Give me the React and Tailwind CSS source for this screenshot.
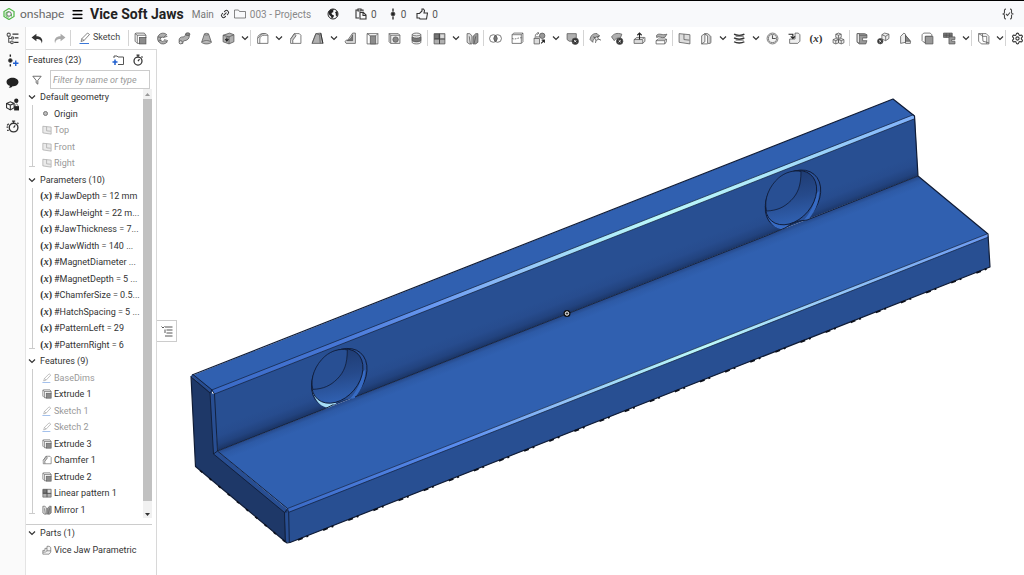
import clsx from 'clsx'
import { Link2, Menu, Settings } from 'lucide-react'

const INK = '#555'
const FILL = '#b0b0b0'

// 24x24 glyphs shared by the toolbar, the side rail and the feature tree
const glyphs = {
  undo: <path d="M10 3 1 10l9 7v-4c6 0 9 2 10 8 3-8-2-13-10-13z" fill="#333" stroke="none" />,
  redo: <path d="m14 3 9 7-9 7v-4c-6 0-9 2-10 8-3-8 2-13 10-13z" fill="#aaa" stroke="none" />,
  sketch: (
    <>
      <path d="m4 19 2-6L17 2l4 3L10 17z M6 13l4 4" />
      <path d="M1 23h19" stroke="#3b78d8" strokeWidth="2" />
    </>
  ),
  extrude: (
    <>
      <path d="M5 20 2 17V3l2-1h15l3 4H6L2 3M6 6v15" fill="#eee" />
      <rect x="10" y="10" width="12" height="12" fill="#8c8c8c" />
      <path d="M6 21h5M22 6v5" />
    </>
  ),
  revolve: (
    <>
      <path d="M20 5A10 10 0 1 0 21 18l-6-2a4 4 0 1 1-1-6z" fill={FILL} />
      <path d="m14 10 7-2M15 14l7 2M3 9l7 1M4 17l6-2" />
    </>
  ),
  sweep: (
    <>
      <path d="M2 15c0-4 3-6 7-6 3 0 4-1 5-5l7 2c0 6-3 9-8 10-3 0-4 1-4 5H3z" fill={FILL} />
      <ellipse cx="18" cy="4" rx="4" ry="2.5" fill="#888" />
      <ellipse cx="5" cy="19" rx="3" ry="3" fill="#ddd" />
    </>
  ),
  loft: (
    <>
      <path d="m8 4 8 0 5 15c-4 4-14 4-18 0z" fill={FILL} />
      <path d="M8 4c2-2 6-2 8 0-2 2-6 2-8 0zM3 19c4-4 14-4 18 0" fill="#ccc" />
    </>
  ),
  thicken: (
    <>
      <path d="M2 6 14 2l8 3v13l-9 4-11-4z" fill={FILL} />
      <path d="m2 6 11 3 9-4M13 9v13" />
      <path d="M9 10v6m-3-3 3 4 3-4" stroke="#222" strokeWidth="2" />
    </>
  ),
  fillet: (
    <>
      <path d="M3 21V12C3 6 8 3 13 3h6l3 3v15z" fill="#fff" />
      <path d="M3 12 6 9c2-4 4-6 10-6M7 21v-8c0-5 4-7 8-7h7" />
    </>
  ),
  chamfer: (
    <>
      <path d="M3 21v-8l7-10h9l3 3v15H3z" fill="#fff" />
      <path d="m3 13 7-10 3 4-6 8v6" fill="#ccc" />
    </>
  ),
  draft: (
    <>
      <path d="m9 3 9-1 4 19H2z" fill={FILL} />
      <path d="m9 3 7 2 1 16M2 21 9 3" />
      <path d="m18 2 4 19" stroke="#333" strokeWidth="1.800" />
    </>
  ),
  rib: (
    <>
      <path d="M16 2h5v19H4l-2-3 2-3h3z" fill="#ddd" />
      <path d="M16 5v11H6c5-2 8-5 10-11z" fill="#777" />
    </>
  ),
  shell: (
    <>
      <path d="M2 3h20v19H2z" fill="#fff" />
      <path d="M8 7h10v15H8z" fill="#8c8c8c" />
      <path d="M2 3l6 4M22 3l-4 4" />
    </>
  ),
  hole: (
    <>
      <path d="M5 21 2 18V3h17l3 3v15z M2 3l3 3h17M5 6v15" fill="#eee" />
      <circle cx="14" cy="14" r="5" fill="#888" />
    </>
  ),
  thread: (
    <>
      <path d="M4 5c0-4 16-4 16 0v14c0 4-16 4-16 0z" fill="#eee" />
      <path d="M4 9c4 3 12 3 16 0v7c-4 3-12 3-16 0z" fill="#777" />
      <path d="M4 5c4 3 12 3 16 0" />
    </>
  ),
  pattern: (
    <>
      <path d="M2 3h20v19H2z" fill={FILL} />
      <path d="M3 4h8v8H3z" fill="#777" />
      <path d="M12 3v19M2 13h20" stroke="#444" strokeWidth="1.800" />
      <path d="M14 5h6v6h-6z" fill="#ddd" stroke="none" />
    </>
  ),
  mirror: (
    <>
      <path d="M2 3h5l4 4v15H6l-4-3z" fill="#ddd" />
      <path d="M22 3h-4l-5 5v14h5l4-3z" fill="#999" />
      <path d="m6 8 2 14M18 8l-3 13" />
    </>
  ),
  boolean: (
    <>
      <circle cx="8" cy="12" r="7" />
      <circle cx="16" cy="12" r="7" />
      <path d="M12 6.500a7 7 0 0 1 0 11 7 7 0 0 1 0-11z" fill="#777" />
    </>
  ),
  split: (
    <>
      <path d="M2 5 5 2h17v16l-3 3H2z" fill="#fff" />
      <path d="M2 5h17v16M19 5l3-3" />
      <path d="M2 12c7 3 12-3 20-1" strokeDasharray="3 2" />
    </>
  ),
  transform: (
    <>
      <path d="M2 12h10v10H2z M2 12l3-3h8" fill="#ddd" />
      <path d="M4 9c0-5 3-7 6-7M8 0l3 2-3 3" />
      <circle cx="17" cy="7" r="5" fill="#999" />
      <path d="m15 21 6-6m0 5v-5h-5" stroke="#222" strokeWidth="2" />
    </>
  ),
  removePart: (
    <>
      <path d="M2 3h17v14H6l-4-3z" fill={FILL} />
      <circle cx="17" cy="17" r="6" fill="#333" />
      <path d="m15 15 4 4m0-4-4 4" stroke="#fff" strokeWidth="1.600" />
    </>
  ),
  modifyFillet: (
    <>
      <path d="M2 14C3 6 8 2 15 3l4 4-7 4c-3 1-5 4-5 8z" fill={FILL} />
      <path d="m8 9 14 6M12 20l2-9 6-4" stroke="#333" />
      <circle cx="14" cy="12" r="3" fill="#eee" />
    </>
  ),
  deleteFace: (
    <>
      <path d="M1 9C5 3 11 1 20 4l-3 8c-5-2-9 0-11 4z" fill={FILL} />
      <circle cx="16" cy="17" r="6" fill="#333" />
      <path d="m14 15 4 4m0-4-4 4" stroke="#fff" strokeWidth="1.600" />
    </>
  ),
  moveFace: (
    <>
      <path d="m2 14 5-4h14l-4 4zM2 14v7h16v-7M18 21l4-4v-7" fill="#ddd" />
      <path d="M12 14V2m-4 4 4-4 4 4" stroke="#222" strokeWidth="2" />
    </>
  ),
  replaceFace: (
    <>
      <path d="M3 6c5-5 10 1 19-2l-4 6C12 12 8 7 3 10z" fill={FILL} />
      <path d="m2 16 4-3h15l-3 3zM2 16v6h16v-6M18 22l3-4v-5" fill="#fff" />
    </>
  ),
  plane: (
    <>
      <path d="M2 3 22 5v17L2 19z" fill="#ddd" />
      <path d="M11 4v10l10 1" />
    </>
  ),
  frame: (
    <>
      <path d="m3 7 6-4v15l-6 4z" fill="#eee" />
      <path d="M9 3h5l5 4v14h-5V7l-5-3z" fill="#ddd" />
      <path d="M3 22h11" />
      <path d="M20 8v12" stroke="#999" strokeWidth="2.500" />
    </>
  ),
  helix: (
    <>
      <path d="M2 4c5 3 14 3 19 0M2 11c5 3 14 3 19 0M2 18c5 3 14 3 19 0" stroke="#333" strokeWidth="2.600" />
      <path d="M5 8h15M5 15h15" />
    </>
  ),
  clock: (
    <>
      <circle cx="12" cy="12" r="10" fill="#fff" />
      <circle cx="12" cy="12" r="7.500" fill="#f2f2f2" />
      <path d="M12 6v6h6" strokeWidth="2" />
    </>
  ),
  derived: (
    <>
      <path d="M3 13v8h15l4-4V5l-3-3h-6v11z" fill="#eee" />
      <path d="M1 4h8v7m-4-3 4 4 4-4" stroke="#222" strokeWidth="2" />
    </>
  ),
  composite: (
    <>
      <path d="m12 2 5 2v6l-5 2-5-2V4zM7 12l5 2v6l-5 2-5-2v-6zM17 12l5 2v6l-5 2-5-2v-6z" fill="#eee" />
      <path d="m7 4 5 2 5-2M12 6v6M2 14l5 2 5-2 5 2 5-2M7 16v6M17 16v6" />
    </>
  ),
  flange: (
    <>
      <path d="M4 3h14l4 2v6h-8v5h8l-2 6H8l-4-3z" fill="#999" />
      <path d="M4 3h4v18l-4-3z" fill="#fff" />
      <path d="M8 6h14" />
    </>
  ),
  flatten: (
    <>
      <path d="m9 5 5-3 8 2v8l-6 4-7-3z" fill="#eee" />
      <path d="m9 5 7 3 6-4M16 8v8" />
      <circle cx="6" cy="17" r="5" fill="#333" />
      <path d="m4 15 4 4m0-4-4 4" stroke="#fff" />
    </>
  ),
  corner: (
    <>
      <path d="M3 21V8l6-6 3 2v15zM12 21h9v-4L12 6z" fill="#eee" />
      <path d="M12 6v11h9z" fill="#888" />
    </>
  ),
  bendRelief: (
    <>
      <path d="M2 5 5 2h12l3 3v3H8v12l-4-2-2-2z" fill="#fff" />
      <path d="M8 8h14v14H8z" fill="#999" />
    </>
  ),
  table: (
    <>
      <path d="M1 2h16v8H1z" fill="#777" />
      <path d="M6 2v8M12 2v8M1 6h16" />
      <path d="M11 9h11v5h-6v3h6v5H11z" fill="#999" />
    </>
  ),
  view: (
    <>
      <path d="M3 3h14l5 5v14H8l-5-5z" fill="#fff" />
      <path d="m10 3 1 14M3 3l7 4M11 17l11 3M10 8h8v14" />
    </>
  ),
  part: (
    <>
      <path d="M2 13h5V8h5V3h5l4 3v11l-4 5H2z" fill="#f4f4f4" />
      <path d="M12 8v6l-4 3H2M12 14h9" />
    </>
  ),
  tree: (
    <>
      <circle cx="5" cy="5" r="3" strokeWidth="2" />
      <path d="M5 8v11h4M5 12h5" strokeWidth="2" />
      <path d="M12 4h11M16 11h7M15 19h8" stroke="#333" strokeWidth="2.400" />
      <circle cx="11" cy="19" r="2.500" strokeWidth="2" />
      <circle cx="12" cy="11" r="2" strokeWidth="2" />
    </>
  ),
  insert: (
    <>
      <circle cx="8" cy="12" r="3.500" fill="#222" />
      <path d="M8 1v4M8 19v4" stroke="#222" strokeWidth="2.600" />
      <path d="M18 12v10M13 17h10" stroke="#1f5fd0" strokeWidth="2.600" />
    </>
  ),
  comment: <path d="M12 3c6 0 11 3 11 8s-5 8-11 8c-1 2-4 3-7 3 2-1 2-3 2-4-4-1-6-4-6-7 0-5 5-8 11-8z" fill="#222" stroke="none" />,
  config: (
    <>
      <path d="m1 10 7-3 7 3v8l-7 4-7-4z M1 10l7 3 7-3M8 13v9" stroke="#333" strokeWidth="2" />
      <circle cx="19" cy="5" r="4" fill="#222" stroke="none" />
      <path d="M15 15h9v8h-9z" fill="#222" stroke="none" />
      <path d="M17 15c0-5 5-5 5 0" />
    </>
  ),
  stopwatch: (
    <>
      <circle cx="12" cy="14" r="8" stroke="#333" strokeWidth="2.500" />
      <path d="M9 2h6M12 2v4M19 5l2 2M12 14l3-4" stroke="#333" strokeWidth="2.500" />
    </>
  ),
  rollingWatch: (
    <>
      <circle cx="14" cy="14" r="8" stroke="#333" strokeWidth="2.500" />
      <path d="M11 2h6M14 2v4M21 5l2 2M14 14l3-4M5 7l-3 3M4 13H1M5 19H2" stroke="#333" strokeWidth="2.200" />
    </>
  ),
  addFolder: (
    <>
      <path d="M4 8V4h6l2 2h11v15H12" strokeWidth="2" />
      <path d="M6 11v11M1 16h10" stroke="#1f5fd0" strokeWidth="3" />
    </>
  ),
  folder: <path d="M1 20V4h8l2 3h12v13z" />,
  funnel: <path d="M2 3h20l-8 10v9l-4-3v-6z" strokeWidth="2" />,
  globe: (
    <>
      <circle cx="12" cy="12" r="10" stroke="#222" strokeWidth="2" />
      <path d="M3 8c3-5 8-6 11-5l-2 3 1 2-4 2 1 3 4 2-1 3-3 3c-2-1-1-4-3-5s-4-4-4-8zM16 9l3-3c3 3 3 8 1 11l-3-3 1-2z" fill="#222" stroke="none" />
    </>
  ),
  copy: (
    <>
      <path d="M8 20H2V4h4m6 0h4v3M6 2h6v4H6z" stroke="#333" strokeWidth="2.200" />
      <path d="M10 9h7l5 5v8H10zM16 9v6h6" stroke="#333" strokeWidth="2.200" />
    </>
  ),
  version: (
    <>
      <circle cx="12" cy="12" r="4" fill="#222" />
      <path d="M12 1v6M12 17v6" stroke="#222" strokeWidth="2.600" />
    </>
  ),
  like: <path d="M2 11h5l5-5V2h3l2 3-1 5h7l-2 12H8l-1-2H2z" stroke="#333" strokeWidth="2.200" />,
  custom: <path d="M8 2C4 2 5 6 5 9s-4 3-4 3 4 0 4 3-1 7 3 7M16 2c4 0 3 4 3 7s4 3 4 3-4 0-4 3 1 7-3 7M8 12l3 3 5-6" stroke="#444" strokeWidth="2.200" />,
  panel: <path d="m1 3 3 3 3-3M8 4h15M11 10h12M11 16h12M8 22h15M8 9v7" strokeWidth="2" />,
}

function Glyph({ name, className = 'size-3' }) {
  return (
    <svg viewBox="0 0 24 24" className={clsx('shrink-0', className)} fill="none" stroke={INK} strokeWidth="1.400" aria-hidden="true">
      {glyphs[name]}
    </svg>
  )
}

function Chevron({ className }) {
  return (
    <svg viewBox="0 0 8 8" className={clsx('size-2 shrink-0', className)} fill="none" stroke="#333" strokeWidth="1.200" aria-hidden="true">
      <path d="m1 2.500 3 3 3-3" />
    </svg>
  )
}

function VariableMark({ className }) {
  return (
    <span className={clsx("font-['Liberation_Serif',serif] font-bold text-[#333]", className)}>
      (<i>x</i>)
    </span>
  )
}

const toolGroups = [
  ['extrude', 'revolve', 'sweep', 'loft', 'thicken', 'more'],
  ['fillet', 'more', 'chamfer', 'draft', 'more', 'rib', 'shell', 'hole', 'thread'],
  ['pattern', 'more', 'mirror'],
  ['boolean', 'split', 'transform', 'more', 'removePart'],
  ['modifyFillet', 'deleteFace', 'moveFace', 'replaceFace'],
  ['plane', 'frame', 'more', 'helix', 'more', 'clock', 'derived', 'variable', 'composite'],
  ['flange', 'flatten', 'corner', 'bendRelief', 'table', 'more'],
  ['view', 'more'],
  ['settings'],
]

const tree = [
  {
    title: 'Default geometry',
    items: [
      { icon: 'origin', label: 'Origin' },
      { icon: 'plane', label: 'Top', muted: true },
      { icon: 'plane', label: 'Front', muted: true },
      { icon: 'plane', label: 'Right', muted: true },
    ],
  },
  {
    title: 'Parameters (10)',
    items: [
      '#JawDepth = 12 mm',
      '#JawHeight = 22 m...',
      '#JawThickness = 7...',
      '#JawWidth = 140 ...',
      '#MagnetDiameter ...',
      '#MagnetDepth = 5 ...',
      '#ChamferSize = 0.5...',
      '#HatchSpacing = 5 ...',
      '#PatternLeft = 29',
      '#PatternRight = 6',
    ].map((label) => ({ icon: 'variable', label })),
  },
  {
    title: 'Features (9)',
    items: [
      { icon: 'sketch', label: 'BaseDims', muted: true },
      { icon: 'extrude', label: 'Extrude 1' },
      { icon: 'sketch', label: 'Sketch 1', muted: true },
      { icon: 'sketch', label: 'Sketch 2', muted: true },
      { icon: 'extrude', label: 'Extrude 3' },
      { icon: 'chamfer', label: 'Chamfer 1' },
      { icon: 'extrude', label: 'Extrude 2' },
      { icon: 'pattern', label: 'Linear pattern 1' },
      { icon: 'mirror', label: 'Mirror 1' },
    ],
  },
]

const rows = tree.flatMap((section) => [
  { section: true, label: section.title },
  ...section.items.map((item, i) => ({ ...item, last: i === section.items.length - 1 })),
])

function Header() {
  return (
    <header className="flex h-[27px] shrink-0 items-center border-t border-black bg-[#f8f9fb] pl-[3px] text-[#555]">
      <svg viewBox="0 0 24 24" className="size-3 shrink-0" fill="none" aria-hidden="true">
        <path d="M12 1 22 7v10l-10 6L2 17V7z" stroke="#52b848" strokeWidth="2.500" />
        <circle cx="12" cy="12" r="4.500" stroke="#666" strokeWidth="2" />
        <path d="M12 7 6 9v7l5 3M17 12v5" stroke="#52b848" strokeWidth="1.800" />
      </svg>
      <span className="ml-[5px] w-[51px] font-['Lato',sans-serif] text-[12px] text-[#666]">onshape</span>
      <button aria-label="Document menu" className="text-black">
        <Menu size={13} strokeWidth={3} />
      </button>
      <h1 className="ml-1.5 text-[14px] font-bold whitespace-nowrap text-[#222]">Vice Soft Jaws</h1>
      <span className="ml-2 text-[10px] text-[#777]">Main</span>
      <button aria-label="Copy link" className="ml-1.5 text-[#333]">
        <Link2 size={10} strokeWidth={2.5} className="-rotate-45" />
      </button>
      <a href="#projects" className="ml-1 flex items-center gap-1 text-[10px] whitespace-nowrap text-[#888]">
        <Glyph name="folder" />
        003 - Projects
      </a>
      <button aria-label="Public document" className="ml-4">
        <Glyph name="globe" />
      </button>
      <div className="ml-4 flex items-center gap-2.5 text-[10px]">
        <button className="flex items-center gap-1" aria-label="Copies"><Glyph name="copy" />0</button>
        <button className="flex items-center gap-0.5" aria-label="Versions"><Glyph name="version" />0</button>
        <button className="flex items-center gap-1" aria-label="Likes"><Glyph name="like" />0</button>
      </div>
      <button aria-label="Custom features" className="mr-2.5 ml-auto">
        <Glyph name="custom" />
      </button>
    </header>
  )
}

function Tool({ name }) {
  if (name === 'more') {
    return (
      <button aria-label="More tools" className="flex h-5 w-[11px] shrink-0 items-center justify-center">
        <Chevron />
      </button>
    )
  }
  return (
    <button aria-label={name} className="flex h-5 w-[22px] shrink-0 items-center justify-center">
      {name === 'variable' && <VariableMark className="text-[11px]" />}
      {name === 'settings' && <Settings size={13} color="#333" />}
      {glyphs[name] && <Glyph name={name} className="size-[13px]" />}
    </button>
  )
}

function Divider() {
  return <span className="h-4 w-px shrink-0 bg-[#d4d4d4]" />
}

function Toolbar() {
  return (
    <div className="flex h-[22px] shrink-0 items-center overflow-hidden bg-white">
      <Tool name="undo" />
      <Tool name="redo" />
      <Divider />
      <button className="flex h-5 w-[57px] shrink-0 items-center justify-center gap-0.5 text-[9px] text-[#444]">
        <Glyph name="sketch" />
        Sketch
      </button>
      {toolGroups.map((group) => (
        <div key={group[0]} className="flex shrink-0 items-center">
          <Divider />
          {group.map((name, i) => (
            <Tool key={i} name={name} />
          ))}
        </div>
      ))}
    </div>
  )
}

function Rail() {
  return (
    <nav className="flex w-[26px] shrink-0 flex-col items-center border-r border-[#e4e4e4] bg-[#fafafa]">
      {['tree', 'insert', 'comment', 'config', 'rollingWatch'].map((name) => (
        <button key={name} aria-label={name} className="flex h-[22px] items-center">
          <Glyph name={name} className="size-[13px]" />
        </button>
      ))}
    </nav>
  )
}

function TreeRow({ row }) {
  if (row.section) {
    return (
      <li className="flex h-4 items-center even:h-[17px]">
        <button className="flex items-center gap-1 pl-0.5">
          <Chevron />
          {row.label}
        </button>
      </li>
    )
  }
  return (
    <li className={clsx('flex h-4 items-center even:h-[17px]', row.muted && 'text-[#999]')}>
      <span className={clsx('flex w-3 shrink-0 justify-center self-stretch', row.last && 'mb-1')}>
        <span className={clsx('flex w-1.5 justify-center', row.last && 'border-b border-[#ccc]')}>
          <span className="w-px bg-[#ccc]" />
        </span>
      </span>
      <button className="flex items-center whitespace-nowrap">
        <span className="flex w-4 items-center justify-end pr-0.5">
          {row.icon === 'variable' && <VariableMark className="text-[10px]" />}
          {row.icon === 'origin' && <span className="mr-1 size-[5px] rounded-full border border-[#777] bg-[#bbb]" />}
          {glyphs[row.icon] && <Glyph name={row.icon} className={clsx('size-2.5', row.muted && 'opacity-60')} />}
        </span>
        {row.label}
      </button>
    </li>
  )
}

function FeaturePanel() {
  return (
    <aside className="flex w-[131px] shrink-0 flex-col border-t border-r border-[#d8d8d8] bg-white text-[9px] leading-3 text-[#333]">
      <div className="flex h-5 items-center pl-0.5">
        <h2>Features (23)</h2>
        <button aria-label="Add folder" className="ml-auto"><Glyph name="addFolder" /></button>
        <button aria-label="Regeneration times" className="mr-3 ml-2"><Glyph name="stopwatch" /></button>
      </div>
      <div className="flex items-center pr-1.5 pl-1.5">
        <label htmlFor="filter" aria-label="Filter features"><Glyph name="funnel" className="size-2.5" /></label>
        <input
          id="filter"
          type="text"
          placeholder="Filter by name or type"
          className="ml-2 h-[19px] w-full min-w-0 border border-[#ccc] px-0.5 outline-none placeholder:text-[#999] placeholder:italic"
        />
      </div>
      <div className="mr-1 flex border-b border-[#ccc] pb-1.5">
        <ul className="min-w-0 flex-1 overflow-hidden">
          {rows.map((row) => (
            <TreeRow key={row.label} row={row} />
          ))}
        </ul>
        <div className="flex w-[9px] shrink-0 flex-col items-center bg-[#f1f1f1]">
          <svg viewBox="0 0 9 10" className="h-2.5 w-full" aria-hidden="true"><path d="m2 7 2.500-3L7 7z" fill="#999" /></svg>
          <div className="w-full flex-1 bg-[#c1c1c1]" />
          <svg viewBox="0 0 9 17" className="h-[17px] w-full" aria-hidden="true"><path d="m2 12 2.500 3L7 12z" fill="#333" /></svg>
        </div>
      </div>
      <ul>
        <TreeRow row={{ section: true, label: 'Parts (1)' }} />
        <li className="flex h-[17px] items-center gap-0.5 pl-4">
          <Glyph name="part" className="size-2.5" />
          Vice Jaw Parametric
        </li>
      </ul>
    </aside>
  )
}

// screw hole, drawn for the right end of the jaw
function ScrewHole({ glint, ...rest }) {
  return (
    <g {...rest}>
      <g clipPath="url(#wall)">
        <ellipse cx="793" cy="199.300" rx="32.700" ry="23.600" transform="rotate(-50 793 199.300)" fill="#2a529a" stroke="#101c36" strokeWidth=".9" />
        <path d="M766 212c3 11 9 17 17 17.500l8-5c-11 1-19-2-25-12.500z" fill={glint} />
        <path d="M806 222c8-8 13-18 13-31l-3 3c-1 10-6 20-14 28z" fill="#376bc4" />
        <ellipse cx="791" cy="197.700" rx="30.300" ry="21.800" transform="rotate(-50 791 197.700)" fill="url(#bore)" stroke="#101c36" strokeWidth=".9" />
        <path d="M801 171.500c0 14-3 22-10 29-7 7-14 10-24.500 10.500-3-12 3-25 12-33 7-6 15-8 22.500-6.500z" fill="#284f93" stroke="#101c36" strokeWidth=".8" />
      </g>
    </g>
  )
}

function JawModel() {
  return (
    <svg viewBox="157 49 867 526" preserveAspectRatio="xMinYMin meet" className="w-full" role="img" aria-label="Vice jaw part">
      <defs>
        <clipPath id="wall">
          <path d="M214 394 915 118l4 58-104 41-8 3-8 1-6 2-8 5-568 223z" />
        </clipPath>
        <linearGradient id="bore" gradientUnits="userSpaceOnUse" x1="816" y1="186" x2="784" y2="224">
          <stop offset="0" stopColor="#1f3c73" />
          <stop offset=".5" stopColor="#264a8b" />
          <stop offset="1" stopColor="#3060b0" />
        </linearGradient>
        <linearGradient id="wallShade" gradientUnits="userSpaceOnUse" x1="567" y1="314" x2="559.200" y2="294">
          <stop offset="0" stopColor="#1b3566" />
          <stop offset=".25" stopColor="#22437f" />
          <stop offset=".6" stopColor="#274c8e" />
          <stop offset="1" stopColor="#284f92" />
        </linearGradient>
        <linearGradient id="floorShade" gradientUnits="userSpaceOnUse" x1="567" y1="314" x2="571" y2="324.200">
          <stop offset="0" stopColor="#26498a" />
          <stop offset=".4" stopColor="#2d5aa6" />
          <stop offset="1" stopColor="#3060b0" />
        </linearGradient>
        <linearGradient id="topGlint" gradientUnits="userSpaceOnUse" x1="212" y1="390" x2="914" y2="116">
          <stop offset="0" stopColor="#3a6ac6" />
          <stop offset=".18" stopColor="#4777d6" />
          <stop offset=".32" stopColor="#6a9af2" />
          <stop offset=".44" stopColor="#93c4f8" />
          <stop offset=".54" stopColor="#abe8fb" />
          <stop offset=".64" stopColor="#bcf9fb" />
          <stop offset=".78" stopColor="#aeeafb" />
          <stop offset="1" stopColor="#7fb0fa" />
        </linearGradient>
        <linearGradient id="frontGlint" gradientUnits="userSpaceOnUse" x1="287" y1="510" x2="988" y2="235">
          <stop offset="0" stopColor="#3a6ac6" />
          <stop offset=".25" stopColor="#5a8df0" />
          <stop offset=".39" stopColor="#90c0f8" />
          <stop offset=".5" stopColor="#aae6fa" />
          <stop offset=".6" stopColor="#bcf9fb" />
          <stop offset=".76" stopColor="#98ccfb" />
          <stop offset="1" stopColor="#6a98f0" />
        </linearGradient>
      </defs>

      <path d="m191 376 4.500 90.500L287 543l3-31-73-61-5-59z" fill="#1e3868" />
      <path d="M191 376 893 99l22 17-702 276z" fill="#3060b0" />
      <path d="M213 394 915 118l3 58-700.500 275z" fill="url(#wallShade)" />
      <path d="M217.500 451 918 176l70 58-701 275z" fill="url(#floorShade)" />
      <path d="m287 511 701-275 2 31-701 276z" fill="#284f92" />
      <path d="M211.700 390 913.500 114.700l1 4.100L214.500 394z" fill="url(#topGlint)" />
      <path d="M287 508.500 987 234l1.500 3-700 275.300z" fill="url(#frontGlint)" />
      <path d="m191 376 2-2 20 16-2 3zM210 393l4.500 1 3 57-4 3zM213.500 454l4-3 69.500 58-2.500 3.500zM284.500 512.700l4.200-.2.600 30h-3z" fill="#284e92" />

      <ScrewHole glint="#376bc4" />
      <ScrewHole glint="#a6def5" transform="translate(-453.700 178.400)" />

      <g fill="none" stroke="#101c36" strokeWidth=".9" strokeLinejoin="round">
        <path d="m191 376 4.500 90.500L287 543l3-.5L990 267l-2-33-70-58-3.500-60L893 99 192 375" strokeWidth="1.200" />
        <path d="m191 377 19 16 3.500 61 71 58.500.8 30M193 374.500l19 15.500M210 393l2-3 2.500 4 3 57-4 3" />
        <path d="M211.700 390 913.500 114.700M214.500 394l700-275.200M287.500 508.500 987 234M288.700 512.300 988.500 237" strokeWidth=".7" />
        <path d="m217.500 451 108-42.500 8-4M355 397l412-161.500 18-7.500 8-5 6-2 8-1 111-44" />
        <path d="m217.500 451 70 57.500M284.500 512.700l3-4 1.200 4 .6 30" />
        <path d="m298 540 692-272.500" stroke="#0b0f1a" strokeWidth="1.800" strokeDasharray="5 4 2 16" />
        <path d="m200 470.500 86 72" stroke="#0b0f1a" strokeWidth="1.600" strokeDasharray="3 9" />
      </g>
      <circle cx="567" cy="313.500" r="2.800" fill="#222" stroke="#111" strokeWidth="1.400" />
      <circle cx="567" cy="313.500" r="1.700" fill="#333" stroke="#fff" strokeWidth="1" />
    </svg>
  )
}

export default function App() {
  return (
    <div className="flex h-screen flex-col overflow-hidden bg-white font-['Roboto','Liberation_Sans',sans-serif]">
      <Header />
      <div className="flex min-h-0 flex-1">
        <Rail />
        <div className="flex min-w-0 flex-1 flex-col">
          <Toolbar />
          <div className="flex min-h-0 flex-1">
            <FeaturePanel />
            <main className="relative min-w-0 flex-1">
              <JawModel />
              <button aria-label="Toggle panel" className="absolute top-[271px] left-0 flex h-[22px] w-5 items-center justify-center border border-l-0 border-[#ccc] bg-white">
                <Glyph name="panel" className="size-3" />
              </button>
            </main>
          </div>
        </div>
      </div>
    </div>
  )
}
